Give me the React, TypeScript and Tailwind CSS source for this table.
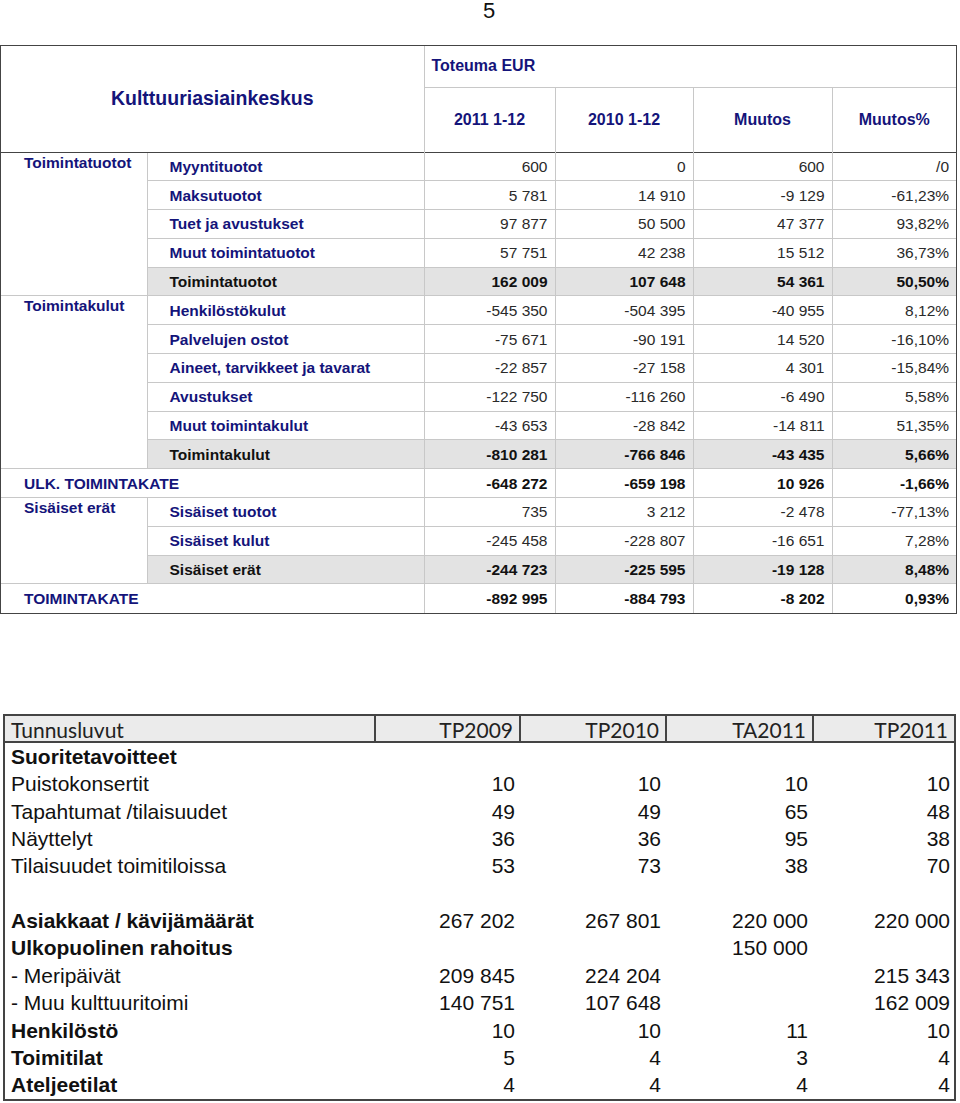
import React from "react";

type Line = { label: string; vals: string[]; kind: "item" | "sum" };
type Group = { title: string; lines: Line[] } | { total: string; vals: string[] };

const groups: Group[] = [
  {
    title: "Toimintatuotot",
    lines: [
      { label: "Myyntituotot", vals: ["600", "0", "600", "/0"], kind: "item" },
      { label: "Maksutuotot", vals: ["5 781", "14 910", "-9 129", "-61,23%"], kind: "item" },
      { label: "Tuet ja avustukset", vals: ["97 877", "50 500", "47 377", "93,82%"], kind: "item" },
      { label: "Muut toimintatuotot", vals: ["57 751", "42 238", "15 512", "36,73%"], kind: "item" },
      { label: "Toimintatuotot", vals: ["162 009", "107 648", "54 361", "50,50%"], kind: "sum" },
    ],
  },
  {
    title: "Toimintakulut",
    lines: [
      { label: "Henkilöstökulut", vals: ["-545 350", "-504 395", "-40 955", "8,12%"], kind: "item" },
      { label: "Palvelujen ostot", vals: ["-75 671", "-90 191", "14 520", "-16,10%"], kind: "item" },
      { label: "Aineet, tarvikkeet ja tavarat", vals: ["-22 857", "-27 158", "4 301", "-15,84%"], kind: "item" },
      { label: "Avustukset", vals: ["-122 750", "-116 260", "-6 490", "5,58%"], kind: "item" },
      { label: "Muut toimintakulut", vals: ["-43 653", "-28 842", "-14 811", "51,35%"], kind: "item" },
      { label: "Toimintakulut", vals: ["-810 281", "-766 846", "-43 435", "5,66%"], kind: "sum" },
    ],
  },
  { total: "ULK. TOIMINTAKATE", vals: ["-648 272", "-659 198", "10 926", "-1,66%"] },
  {
    title: "Sisäiset erät",
    lines: [
      { label: "Sisäiset tuotot", vals: ["735", "3 212", "-2 478", "-77,13%"], kind: "item" },
      { label: "Sisäiset kulut", vals: ["-245 458", "-228 807", "-16 651", "7,28%"], kind: "item" },
      { label: "Sisäiset erät", vals: ["-244 723", "-225 595", "-19 128", "8,48%"], kind: "sum" },
    ],
  },
  { total: "TOIMINTAKATE", vals: ["-892 995", "-884 793", "-8 202", "0,93%"] },
];

const kpis: { label: string; bold?: boolean; vals: string[] }[] = [
  { label: "Suoritetavoitteet", bold: true, vals: ["", "", "", ""] },
  { label: "Puistokonsertit", vals: ["10", "10", "10", "10"] },
  { label: "Tapahtumat /tilaisuudet", vals: ["49", "49", "65", "48"] },
  { label: "Näyttelyt", vals: ["36", "36", "95", "38"] },
  { label: "Tilaisuudet toimitiloissa", vals: ["53", "73", "38", "70"] },
  { label: "", vals: ["", "", "", ""] },
  { label: "Asiakkaat / kävijämäärät", bold: true, vals: ["267 202", "267 801", "220 000", "220 000"] },
  { label: "Ulkopuolinen rahoitus", bold: true, vals: ["", "", "150 000", ""] },
  { label: "- Meripäivät", vals: ["209 845", "224 204", "", "215 343"] },
  { label: "- Muu kulttuuritoimi", vals: ["140 751", "107 648", "", "162 009"] },
  { label: "Henkilöstö", bold: true, vals: ["10", "10", "11", "10"] },
  { label: "Toimitilat", bold: true, vals: ["5", "4", "3", "4"] },
  { label: "Ateljeetilat", bold: true, vals: ["4", "4", "4", "4"] },
];

function NumCells({ vals, bold, first }: { vals: string[]; bold: boolean; first: boolean }) {
  return (
    <>
      {vals.map((v, i) => (
        <td
          key={i}
          className={`border-l border-t border-[#c8c8c8] pr-[7px] text-right ${
            first ? "border-t-[#444]" : ""
          } ${bold ? "font-bold text-[#111]" : "text-[#2a2a2a]"}`}
        >
          {v}
        </td>
      ))}
    </>
  );
}

function ResultTable() {
  let firstRow = true;
  const rows: React.ReactNode[] = [];
  groups.forEach((g, gi) => {
    if ("total" in g) {
      const first = firstRow;
      firstRow = false;
      rows.push(
        <tr key={gi} className="h-[28.8px]">
          <td
            colSpan={2}
            className={`border-t border-[#c8c8c8] pl-[23px] font-bold text-[#14147a] ${first ? "border-t-[#444]" : ""}`}
          >
            {g.total}
          </td>
          <NumCells vals={g.vals} bold first={first} />
        </tr>
      );
      return;
    }
    g.lines.forEach((l, li) => {
      const first = firstRow;
      firstRow = false;
      const sum = l.kind === "sum";
      rows.push(
        <tr key={`${gi}-${li}`} className={`h-[28.8px] ${sum ? "bg-[#e3e3e3]" : ""}`}>
          {li === 0 && (
            <td
              rowSpan={g.lines.length}
              className={`border-t border-[#c8c8c8] bg-white pl-[23px] pt-[1px] align-top font-bold leading-[18px] text-[#14147a] ${
                first ? "border-t-[#444]" : ""
              }`}
            >
              {g.title}
            </td>
          )}
          <td
            className={`border-l border-t border-[#c8c8c8] pl-[22px] font-bold ${
              sum ? "text-[#111]" : "text-[#14147a]"
            } ${first ? "border-t-[#444]" : ""}`}
          >
            {l.label}
          </td>
          <NumCells vals={l.vals} bold={sum} first={first} />
        </tr>
      );
    });
  });

  return (
    <div className="w-[957px] border border-[#444] font-['Liberation_Sans',Arial,sans-serif] text-[15.5px]">
      <table className="w-full table-fixed border-collapse">
        <colgroup>
          <col className="w-[146px]" />
          <col className="w-[277px]" />
          <col className="w-[131px]" />
          <col className="w-[138px]" />
          <col className="w-[139px]" />
          <col className="w-[124px]" />
        </colgroup>
        <thead>
          <tr className="h-[41px]">
            <td colSpan={2} rowSpan={2} className="text-center text-[19.5px] font-bold text-[#14147a]">
              Kulttuuriasiainkeskus
            </td>
            <td colSpan={4} className="border-l border-[#c8c8c8] pl-[7px] text-[16px] font-bold text-[#14147a]">
              Toteuma EUR
            </td>
          </tr>
          <tr className="h-[65px]">
            {["2011 1-12", "2010 1-12", "Muutos", "Muutos%"].map((h) => (
              <td key={h} className="border-l border-t border-[#c8c8c8] text-center text-[16px] font-bold text-[#14147a]">
                {h}
              </td>
            ))}
          </tr>
        </thead>
        <tbody>{rows}</tbody>
      </table>
    </div>
  );
}

function KpiTable() {
  const heads = ["TP2009", "TP2010", "TA2011", "TP2011"];
  return (
    <div className="ml-[3px] w-[953px] border-2 border-[#444] text-[#111]">
      <div className="grid h-[27px] grid-cols-[369px_145px_146px_147px_142px] border-b-2 border-[#444] bg-[#ebebeb] font-['Lato','Open_Sans',sans-serif] text-[21px] leading-[27px] text-[#222]">
        <div className="pl-[6px]">Tunnusluvut</div>
        {heads.map((h) => (
          <div key={h} className="border-l-2 border-[#444] pr-[6px] text-right">
            {h}
          </div>
        ))}
      </div>
      <div className="font-['Liberation_Sans',Arial,sans-serif] text-[21px]">
        {kpis.map((k, i) => (
          <div
            key={i}
            className="grid h-[27.4px] grid-cols-[369px_147px_146px_147px_142px] items-center leading-[27.4px]"
          >
            <div className={`pl-[6px] ${k.bold ? "font-bold" : ""}`}>{k.label}</div>
            {k.vals.map((v, j) => (
              <div key={j} className="pr-[6px] text-right">
                {v}
              </div>
            ))}
          </div>
        ))}
      </div>
    </div>
  );
}

export default function App() {
  return (
    <div className="w-[960px] bg-white pb-[2px]">
      <div className="h-[45px] pl-[483px] font-['Liberation_Sans',Arial,sans-serif] text-[22px] leading-none text-[#111]">
        5
      </div>
      <ResultTable />
      <div className="h-[100px]" />
      <KpiTable />
    </div>
  );
}
